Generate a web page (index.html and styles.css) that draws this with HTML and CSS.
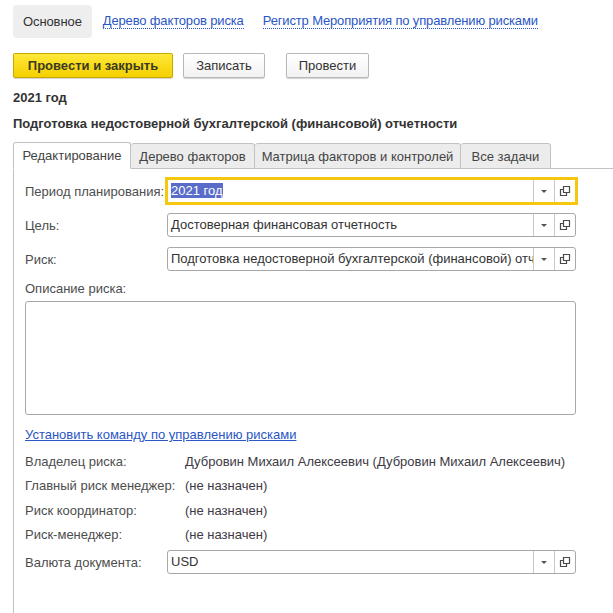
FILE: index.html
```html
<!DOCTYPE html>
<html lang="ru">
<head>
<meta charset="utf-8">
<link rel="stylesheet" href="styles.css">
</head>
<body>
<div class="page">
  <nav class="topnav">
    <span class="nav-active">Основное</span>
    <a class="nav-link">Дерево факторов риска</a>
    <a class="nav-link">Регистр Мероприятия по управлению рисками</a>
  </nav>
  <div class="toolbar">
    <button class="btn btn-primary">Провести и закрыть</button>
    <button class="btn btn-save">Записать</button>
    <button class="btn btn-post">Провести</button>
  </div>
  <div class="h-year">2021 год</div>
  <div class="h-title">Подготовка недостоверной бухгалтерской (финансовой) отчетности</div>

  <div class="tabs">
    <div class="tab tab-active">Редактирование</div>
    <div class="tab tab-2">Дерево факторов</div>
    <div class="tab tab-3">Матрица факторов и контролей</div>
    <div class="tab tab-4">Все задачи</div>
    <div class="tab-rest"></div>
  </div>

  <div class="panel">
    <div class="row">
      <div class="label">Период планирования:</div>
      <div class="field field-focus">
        <div class="field-text"><span class="sel">2021 год</span></div>
        <div class="field-btn"><span class="arrow"></span></div>
        <div class="field-btn"><svg width="12" height="12" viewBox="0 0 12 12"><path d="M4.5 1.5h6v6h-6z M4.5 4.5h-3v6h6v-3" fill="none" stroke="#4a4a4a" stroke-width="1.2"/></svg></div>
      </div>
    </div>
    <div class="row">
      <div class="label">Цель:</div>
      <div class="field">
        <div class="field-text">Достоверная финансовая отчетность</div>
        <div class="field-btn"><span class="arrow"></span></div>
        <div class="field-btn"><svg width="12" height="12" viewBox="0 0 12 12"><path d="M4.5 1.5h6v6h-6z M4.5 4.5h-3v6h6v-3" fill="none" stroke="#4a4a4a" stroke-width="1.2"/></svg></div>
      </div>
    </div>
    <div class="row">
      <div class="label">Риск:</div>
      <div class="field">
        <div class="field-text">Подготовка недостоверной бухгалтерской (финансовой) отчетности</div>
        <div class="field-btn"><span class="arrow"></span></div>
        <div class="field-btn"><svg width="12" height="12" viewBox="0 0 12 12"><path d="M4.5 1.5h6v6h-6z M4.5 4.5h-3v6h6v-3" fill="none" stroke="#4a4a4a" stroke-width="1.2"/></svg></div>
      </div>
    </div>

    <div class="label desc-label">Описание риска:</div>
    <div class="textarea"></div>

    <a class="cmd-link">Установить команду по управлению рисками</a>

    <div class="info">
      <div class="info-row"><div class="info-label">Владелец риска:</div><div class="info-value">Дубровин Михаил Алексеевич (Дубровин Михаил Алексеевич)</div></div>
      <div class="info-row"><div class="info-label">Главный риск менеджер:</div><div class="info-value">(не назначен)</div></div>
      <div class="info-row"><div class="info-label">Риск координатор:</div><div class="info-value">(не назначен)</div></div>
      <div class="info-row"><div class="info-label">Риск-менеджер:</div><div class="info-value">(не назначен)</div></div>
    </div>

    <div class="row row-currency">
      <div class="label">Валюта документа:</div>
      <div class="field">
        <div class="field-text">USD</div>
        <div class="field-btn"><span class="arrow"></span></div>
        <div class="field-btn"><svg width="12" height="12" viewBox="0 0 12 12"><path d="M4.5 1.5h6v6h-6z M4.5 4.5h-3v6h6v-3" fill="none" stroke="#4a4a4a" stroke-width="1.2"/></svg></div>
      </div>
    </div>
  </div>
</div>
</body>
</html>
```

FILE: styles.css
```css
* { box-sizing: border-box; }
html, body { margin: 0; padding: 0; background: #fff; }
body {
  font-family: "Liberation Sans", Arial, sans-serif;
  font-size: 13px;
  color: #333;
  overflow: hidden;
  height: 613px;
}
.page { padding-left: 13px; }

.topnav {
  display: flex;
  align-items: center;
  padding-top: 5px;
  height: 38px;
}
.nav-active {
  display: flex;
  align-items: center;
  height: 33px;
  padding: 0 10px;
  background: #eeeeee;
  border-radius: 4px;
  color: #333;
  white-space: nowrap;
  letter-spacing: -0.1px;
}
.nav-link {
  color: #2a56c6;
  text-decoration: none;
  border-bottom: 1px dotted #2a56c6;
  line-height: 14px;
  margin-left: 11px;
  margin-right: 8px;
  white-space: nowrap;
  letter-spacing: -0.15px;
}

.toolbar {
  display: flex;
  margin-top: 15px;
  height: 25px;
}
.btn {
  font-family: inherit;
  font-size: 13px;
  height: 25px;
  padding: 0;
  border: 1px solid #b8b8b8;
  border-radius: 2px;
  background: linear-gradient(#ffffff, #f2f2f2);
  color: #333;
  box-shadow: 0 1px 1px rgba(0,0,0,0.18);
}
.btn-primary {
  width: 160px;
  font-weight: bold;
  background: linear-gradient(#ffe83a, #f5d000);
  border-color: #c9a800;
  color: #3a3a20;
}
.btn-save { width: 82px; margin-left: 10px; }
.btn-post { width: 83px; margin-left: 21px; }

.h-year {
  font-weight: bold;
  margin-top: 12px;
  line-height: 16px;
  color: #333;
}
.h-title {
  font-weight: bold;
  margin-top: 10px;
  line-height: 16px;
  color: #333;
}

.tabs {
  display: flex;
  margin-top: 10px;
  height: 27px;
  align-items: flex-end;
}
.tab {
  flex-shrink: 0;
  height: 26px;
  display: flex;
  align-items: center;
  justify-content: center;
  padding: 0;
  background: #ececec;
  border: 1px solid #c2c2c2;
  border-left: none;
  border-radius: 3px 3px 0 0;
  color: #444;
  white-space: nowrap;
}
.tab-active {
  height: 27px;
  background: #fff;
  border-left: 1px solid #c2c2c2;
  border-bottom: 1px solid #fff;
  width: 118px;
}
.tab-2 { width: 124px; }
.tab-3 { width: 206px; }
.tab-4 { width: 90px; }
.tab-rest {
  flex: 1;
  border-bottom: 1px solid #c2c2c2;
  height: 1px;
}

.panel {
  border-left: 1px solid #c2c2c2;
  padding: 10px 0 0 11px;
  height: 460px;
}
.row {
  display: flex;
  align-items: center;
  height: 24px;
  margin-bottom: 10px;
}
.label {
  width: 142px;
  color: #4d4d4d;
  white-space: nowrap;
}
.field {
  width: 409px;
  height: 24px;
  border: 1px solid #a8a8a8;
  border-radius: 3px;
  display: flex;
  align-items: stretch;
  background: #fff;
}
.field-focus {
  border-color: #f5c80f;
  box-shadow: 0 0 0 2px #f5c80f;
  border-radius: 0;
}
.field-text {
  flex: 1;
  overflow: hidden;
  white-space: nowrap;
  padding-left: 3px;
  line-height: 22px;
  color: #333;
}
.sel {
  background: #5a6cc9;
  color: #fff;
}
.field-btn {
  width: 21px;
  border-left: 1px solid #c8c8c8;
  display: flex;
  align-items: center;
  justify-content: center;
}
.arrow {
  width: 0;
  height: 0;
  border-left: 3px solid transparent;
  border-right: 3px solid transparent;
  border-top: 3px solid #555;
}

.desc-label { margin-top: 2px; line-height: 16px; }
.textarea {
  width: 551px;
  height: 114px;
  border: 1px solid #a8a8a8;
  border-radius: 3px;
  margin-top: 4px;
}
.cmd-link {
  display: inline-block;
  margin-top: 12px;
  color: #2a56c6;
  text-decoration: underline;
  line-height: 16px;
}
.info { margin-top: 6px; }
.info-row {
  display: flex;
  height: 24.5px;
  align-items: center;
}
.info-label { width: 160px; color: #4d4d4d; white-space: nowrap; }
.info-value { color: #3d3a44; white-space: nowrap; }
.row-currency { margin-top: 3px; }
```
